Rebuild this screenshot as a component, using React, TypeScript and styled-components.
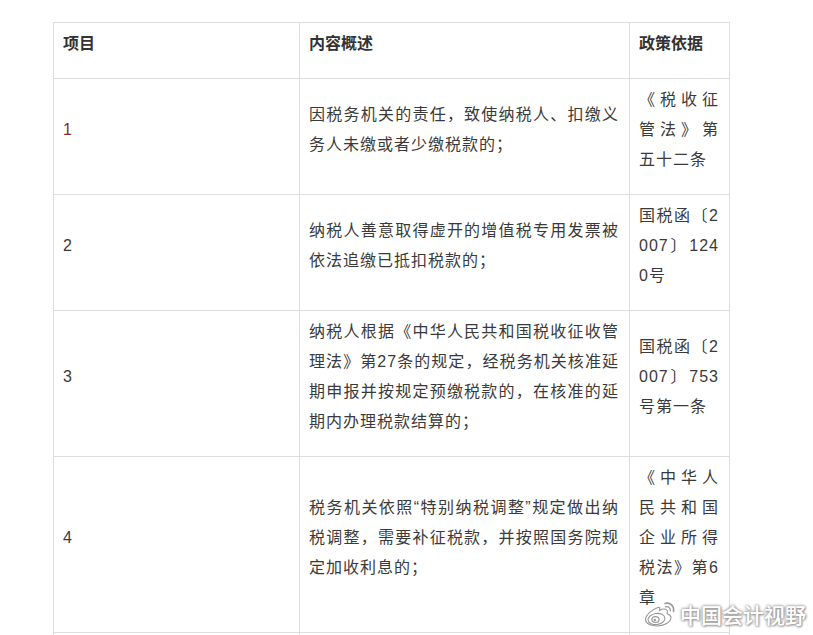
import React from 'react';
import styled, { createGlobalStyle } from 'styled-components';

const GlobalStyle = createGlobalStyle`
  html, body {
    margin: 0;
    padding: 0;
    background: #fff;
    overflow: hidden;
  }
`;

const Page = styled.div`
  position: relative;
  width: 813px;
  height: 635px;
  overflow: hidden;
  padding: 22px 0 0 53px;
  box-sizing: border-box;
  font-family: "Liberation Sans", "Noto Sans CJK SC", sans-serif;
  color: #3a3a3a;
`;

const Table = styled.table`
  width: 677px;
  table-layout: fixed;
  border-collapse: collapse;
`;

const HeadCell = styled.th`
  border: 1px solid #ddd;
  padding: 6px 10px 4px 9px;
  text-align: left;
  vertical-align: middle;
  font-size: 16px;
  font-weight: 700;
  line-height: 30px;
  color: #333;
`;

const Cell = styled.td`
  border: 1px solid #ddd;
  padding: 6px 10px 4px 9px;
  vertical-align: middle;
  font-size: 16px;
  line-height: 30px;
  letter-spacing: 1px;
`;

const Para = styled.p`
  margin: 0 0 15px;
  text-align: justify;
  word-break: break-all;
`;

const Num = styled.p<{ $color?: string }>`
  margin: 0 0 15px;
  color: ${p => p.$color || '#3a3a3a'};
`;

const Filler = styled.td`
  border: 1px solid #ddd;
  height: 60px;
`;

const Watermark = styled.div`
  position: absolute;
  left: 644px;
  top: 600px;
  display: flex;
  align-items: center;
  gap: 3px;
`;

const MarkText = styled.span`
  font-family: "Noto Sans CJK SC", sans-serif;
  font-size: 21px;
  line-height: 26px;
  font-weight: 500;
  color: #fff;
  white-space: nowrap;
  text-shadow: 0 0 3px #999, 0 0 3px #999, 1px 1px 2px #aaa;
`;

const rows = [
  {
    id: '1',
    color: '#7a3030',
    desc: '因税务机关的责任，致使纳税人、扣缴义务人未缴或者少缴税款的；',
    law: '《税收征管法》第五十二条',
  },
  {
    id: '2',
    desc: '纳税人善意取得虚开的增值税专用发票被依法追缴已抵扣税款的；',
    law: '国税函〔2007〕1240号',
  },
  {
    id: '3',
    desc: '纳税人根据《中华人民共和国税收征收管理法》第27条的规定，经税务机关核准延期申报并按规定预缴税款的，在核准的延期内办理税款结算的；',
    law: '国税函〔2007〕753号第一条',
  },
  {
    id: '4',
    desc: '税务机关依照“特别纳税调整”规定做出纳税调整，需要补征税款，并按照国务院规定加收利息的；',
    law: '《中华人民共和国企业所得税法》第6章',
  },
];

const WeiboMark = () => (
  <svg width="33" height="27" viewBox="0 0 33 27" fill="none">
    <path
      d="M14 7.5C8 9.5 1.5 15 1.5 19.5C1.5 23.5 7 26 13 26C20 26 27 22 27 17.5C27 15 24.5 14.2 23 13.6C23.8 11.5 23.5 9.8 21.5 9.2C19.5 8.7 17 9.6 15.5 10.4C16.2 8 15.8 6.9 14 7.5Z"
      fill="#fff"
      stroke="#999"
      strokeWidth="1.1"
    />
    <ellipse cx="12.5" cy="19" rx="8.5" ry="5.5" transform="rotate(-8 12.5 19)" stroke="#999" strokeWidth="1.1" />
    <ellipse cx="11.5" cy="19.5" rx="3.6" ry="2.9" stroke="#999" strokeWidth="1.2" />
    <circle cx="10.8" cy="20" r="1.2" fill="#999" />
    <path d="M21 3.5C26 2 30.5 6 29.5 11.5" stroke="#999" strokeWidth="1.6" strokeLinecap="round" />
    <path d="M21.5 6.8C24.5 6 27 8.4 26.2 11" stroke="#999" strokeWidth="1.3" strokeLinecap="round" />
  </svg>
);

const App: React.FC = () => (
  <Page>
    <GlobalStyle />
    <Table>
      <colgroup>
        <col style={{ width: 246 }} />
        <col style={{ width: 330 }} />
        <col style={{ width: 100 }} />
      </colgroup>
      <thead>
        <tr>
          <HeadCell><Para>项目</Para></HeadCell>
          <HeadCell><Para>内容概述</Para></HeadCell>
          <HeadCell><Para>政策依据</Para></HeadCell>
        </tr>
      </thead>
      <tbody>
        {rows.map(row => (
          <tr key={row.id}>
            <Cell><Num $color={row.color}>{row.id}</Num></Cell>
            <Cell><Para>{row.desc}</Para></Cell>
            <Cell><Para>{row.law}</Para></Cell>
          </tr>
        ))}
        <tr>
          <Filler />
          <Filler />
          <Filler />
        </tr>
      </tbody>
    </Table>
    <Watermark>
      <WeiboMark />
      <MarkText>中国会计视野</MarkText>
    </Watermark>
  </Page>
);

export default App;
